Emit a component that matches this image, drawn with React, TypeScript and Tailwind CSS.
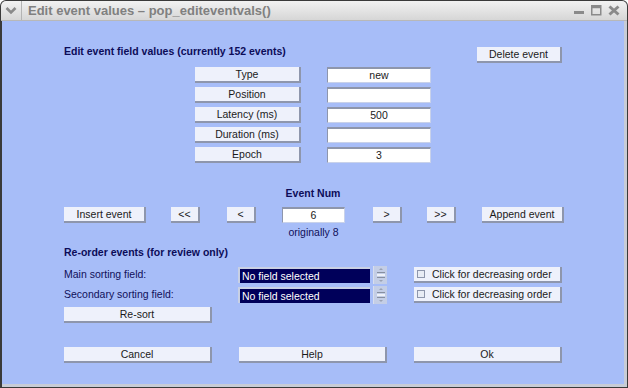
import React from "react";

const font = { fontFamily: '"Liberation Sans", Arial, sans-serif' };

function Btn({ w, children, className = "" }: { w: string; children?: React.ReactNode; className?: string }) {
  return (
    <div
      className={`${w} h-[16px] bg-[#eef1fb] border-r-2 border-b-2 border-[#8e96ac] flex items-center justify-center text-[10.5px] leading-none text-[#1a1a1a] ${className}`}
    >
      {children}
    </div>
  );
}

function Edit({ w, children }: { w: string; children?: React.ReactNode }) {
  return (
    <div
      className={`${w} h-[16px] bg-white border-t-2 border-l border-t-[#8e96ac] border-l-[#8e96ac] border-b border-r border-b-[#c9d2ea] border-r-[#c9d2ea] flex items-center justify-center text-[10.5px] leading-none text-[#1a1a1a]`}
    >
      {children}
    </div>
  );
}

function Popup() {
  return (
    <div className="flex items-center gap-[3px]">
      <div className="w-[132px] h-[16px] bg-[#00005a] border-t-2 border-l-2 border-[#c8d0e4] flex items-center pl-[2px] text-[10.5px] leading-none text-white">
        No field selected
      </div>
      <div className="w-[14px] h-[18px] bg-[#c4cee6] border-l border-[#d8deee] flex flex-col items-center justify-between py-[2px]">
        <div className="w-0 h-0 border-l-[2px] border-r-[2px] border-b-[2px] border-l-transparent border-r-transparent border-b-[#9aa2b4]" />
        <div className="flex flex-col items-center gap-[1px]">
          <div className="w-[8px] h-[1px] bg-[#8890a0]" />
          <div className="w-[8px] h-[2px] bg-[#eef1f8]" />
          <div className="w-[8px] h-[1px] bg-[#8890a0]" />
        </div>
        <div className="w-0 h-0 border-l-[2px] border-r-[2px] border-t-[2px] border-l-transparent border-r-transparent border-t-[#9aa2b4]" />
      </div>
    </div>
  );
}

function Check() {
  return (
    <div className="w-[148px] h-[16px] bg-[#eef1fb] border-r-2 border-b-2 border-[#8e96ac] flex items-center pl-[3px] gap-[7px] text-[10.5px] leading-none text-[#1a1a1a]">
      <div className="w-[8px] h-[8px] border border-[#8e96ac] bg-[#e8ecf4]" />
      <span>Click for decreasing order</span>
    </div>
  );
}

export default function App() {
  const fields: [string, string][] = [
    ["Type", "new"],
    ["Position", ""],
    ["Latency (ms)", "500"],
    ["Duration (ms)", ""],
    ["Epoch", "3"],
  ];
  return (
    <div className="w-[628px] h-[388px] bg-[#3a3a3a] rounded-t-[6px] overflow-hidden flex flex-col" style={font}>
      {/* title bar */}
      <div className="h-[20px] mx-[1px] mt-[1px] rounded-t-[5px] bg-gradient-to-b from-[#f2f2f2] to-[#d6d6d6] flex items-center border-b border-[#b8b8b8]">
        <div className="w-[21px] h-full flex items-center justify-center border-r border-[#b4b4b4]">
          <svg width="12" height="9" viewBox="0 0 12 9">
            <path d="M1.5 2 L6 6.5 L10.5 2" stroke="#8a8a8a" strokeWidth="2.6" fill="none" />
          </svg>
        </div>
        <div className="ml-[6px] text-[13px] font-bold text-[#808080] leading-none">
          Edit event values – pop_editeventvals()
        </div>
        <div className="ml-auto flex items-center gap-[6px] pr-[7px]">
          <svg width="11" height="11" viewBox="0 0 11 11">
            <rect x="0" y="6" width="10" height="3" fill="#8a8a8a" />
          </svg>
          <svg width="11" height="11" viewBox="0 0 11 11">
            <rect x="0.75" y="0.75" width="9" height="9" stroke="#8a8a8a" strokeWidth="1.5" fill="none" />
            <rect x="0.75" y="0.75" width="9" height="2.5" fill="#8a8a8a" />
          </svg>
          <svg width="12" height="11" viewBox="0 0 12 11">
            <path d="M1.5 1.5 L10.5 9.5 M10.5 1.5 L1.5 9.5" stroke="#8a8a8a" strokeWidth="3" />
          </svg>
        </div>
      </div>
      {/* body */}
      <div className="flex-1 ml-[2px] mr-[1px] mb-[1px] bg-[#a7bdf8] border-r-[3px] border-b-[3px] border-r-[#c8ccd6] border-b-[#c8ccd6] pl-[62px] pt-[23px] text-[10.5px] text-[#10105a] leading-[14px]">
        {/* heading row */}
        <div className="flex h-[19px]">
          <div className="font-bold text-[10.5px] leading-[14px] text-[#0c0c58]">
            Edit event field values (currently 152 events)
          </div>
          <Btn w="w-[85px]" className="ml-auto mr-[62px] mt-[3px]">Delete event</Btn>
        </div>
        {/* fields */}
        <div className="flex flex-col gap-[4px] mt-[4px] ml-[131px]">
          {fields.map(([l, v]) => (
            <div key={l} className="flex gap-[26px]">
              <Btn w="w-[106px]">{l}</Btn>
              <Edit w="w-[104px]">{v}</Edit>
            </div>
          ))}
        </div>
        {/* event num */}
        <div className="mt-[23px] ml-[218px] w-[62px] text-center font-bold text-[#0c0c58] whitespace-nowrap flex justify-center">
          Event Num
        </div>
        <div className="mt-[7px] flex items-start">
          <Btn w="w-[82px]">Insert event</Btn>
          <Btn w="w-[29px]" className="ml-[25px]">{"<<"}</Btn>
          <Btn w="w-[29px]" className="ml-[27px]">{"<"}</Btn>
          <div className="ml-[26px] flex flex-col items-center">
            <Edit w="w-[63px]">6</Edit>
            <div className="mt-[2px] text-[#10105a] whitespace-nowrap">originally 8</div>
          </div>
          <Btn w="w-[29px]" className="ml-[28px]">{">"}</Btn>
          <Btn w="w-[29px]" className="ml-[25px]">{">>"}</Btn>
          <Btn w="w-[82px]" className="ml-[26px]">Append event</Btn>
        </div>
        {/* reorder */}
        <div className="mt-[6px] font-bold text-[#0c0c58]">Re-order events (for review only)</div>
        <div className="mt-[8px] flex flex-col gap-[4px]">
          {["Main sorting field:", "Secondary sorting field:"].map((l) => (
            <div key={l} className="flex items-center h-[16px]">
              <div className="w-[174px] -mt-[3px] text-[#10105a]">{l}</div>
              <Popup />
              <div className="ml-[27px]">
                <Check />
              </div>
            </div>
          ))}
          <Btn w="w-[148px]">Re-sort</Btn>
        </div>
        <div className="mt-[24px] flex">
          <Btn w="w-[148px]">Cancel</Btn>
          <Btn w="w-[148px]" className="ml-[27px]">Help</Btn>
          <Btn w="w-[148px]" className="ml-[27px]">Ok</Btn>
        </div>
      </div>
    </div>
  );
}
